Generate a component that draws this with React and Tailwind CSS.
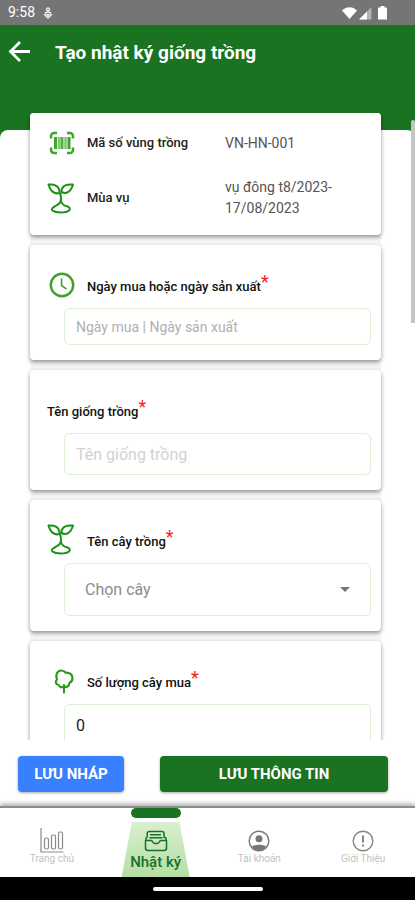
import React from "react";

const SproutIcon = () => (
  <svg viewBox="0 0 28 31" className="h-[31px] w-7" fill="none" stroke="#1c9116" strokeWidth="2" strokeLinejoin="round">
    <path d="M1.500 1.500c6-.4 11 1 11.200 8.500C7 11.500 3.500 8.500 1.500 1.500z" />
    <path d="M26 1.500c-6.500-.4-11.400 1-11.700 7.500 5.200 2.500 9.700-.5 11.700-7.500z" />
    <path d="M13 10c1.400 3 1 6 .8 9.500" />
    <path d="M13.800 18c-.6 3-3.300 3.600-5.300 4.800-3.500 2.200-4.500 3.500-3 4.700 3.700 2.700 13.300 2.700 16.500 0 1.800-1.600.5-3.400-2-4.200-3.200-.6-5-2.300-6.200-5.300z" />
  </svg>
);

const BarcodeIcon = () => (
  <svg viewBox="-2 0 28 24" className="h-6 w-7" fill="none" stroke="#3fa52a">
    <path
      d="M2 7.500V5a3 3 0 0 1 3-3h3M18 2h3a3 3 0 0 1 3 3v2.500M24 16.500V19a3 3 0 0 1-3 3h-3M8 22H5a3 3 0 0 1-3-3v-2.500"
      strokeWidth="2.500"
    />
    <path d="M6.500 6v12M20 6v12" strokeWidth="3" />
    <path d="M10 6v12M16.500 6v12" strokeWidth="2.500" strokeOpacity=".65" />
    <path d="M13 6v12" strokeWidth="3" strokeOpacity=".9" />
  </svg>
);

const ClockIcon = () => (
  <svg viewBox="-2 0 28 26" className="h-[26px] w-7" fill="none" stroke="#3fa02c" strokeLinecap="round" strokeLinejoin="round">
    <circle cx="13" cy="13" r="11.200" strokeWidth="2.400" />
    <path d="M12.500 7v6.500l4.500 3.200" strokeWidth="1.600" />
  </svg>
);

const TreeIcon = () => (
  <svg viewBox="0 0 28 26" className="h-[26px] w-7" fill="none" stroke="#2d9a1d" strokeWidth="2.200" strokeLinecap="round" strokeLinejoin="round">
    <path d="M17 18.500c-2 1.500-4.600.6-5.300-1.500-2.900-.2-3.800-3.600-1.700-5.500C8 7 10.300 2.500 14.500 2.500c2 0 3.200.8 3.900 2.100 4.200-.3 7.100 2 7.100 5.400 0 2.800-1.400 4.300-3 4.900-.4 3.500-3.200 4.700-5.500 3.600z" />
    <path d="M17 17v7.500" />
  </svg>
);

const ChartIcon = () => (
  <svg viewBox="0 0 24 25" className="h-[25px] w-6" fill="none" stroke="#8b8b8b" strokeWidth="1.200">
    <path d="M1 0v24h22.500" />
    <rect x="4.500" y="10" width="4" height="11" rx="1.800" />
    <rect x="11.500" y="7" width="4" height="14" rx="1.500" />
    <rect x="18.500" y="4" width="4" height="17" rx="1.500" />
  </svg>
);

const InboxIcon = () => (
  <svg viewBox="0 0 24 22" className="h-[22px] w-6" fill="none" stroke="#17702a" strokeWidth="1.500" strokeLinejoin="round" strokeLinecap="round">
    <path d="M1.500 10.500h6c.5 0 1.500 3 3 3h3c1.500 0 2.500-3 3-3h6V18a2.500 2.500 0 0 1-2.500 2.500H4A2.500 2.500 0 0 1 1.500 18z" />
    <path d="M2 10V8l1.200-1V3.500a2 2 0 0 1 2-2H18a2 2 0 0 1 2 2V7l2 1v2M6.500 4.800h10M6 7.800h12" />
  </svg>
);

const AccountIcon = () => (
  <svg viewBox="0 0 24 24" className="h-6 w-6" fill="#777">
    <circle cx="12" cy="12" r="9.800" fill="none" stroke="#777" strokeWidth="1.400" />
    <circle cx="12" cy="9.800" r="3.500" />
    <path d="M4.800 17.500c3.500-2.200 10.900-2.200 14.400 0-3.200 5.200-11.200 5.200-14.400 0z" />
  </svg>
);

const InfoIcon = () => (
  <svg viewBox="0 0 24 24" className="h-6 w-6" fill="none" stroke="#858585" strokeWidth="1.400">
    <circle cx="12" cy="12" r="9.800" />
    <path d="M12 6.500v7M12 15.500v2" strokeWidth="2" />
  </svg>
);

const StatusBar = () => (
  <div className="flex h-[25px] shrink-0 items-center justify-between bg-[#757575] pl-2 pr-[27px] text-white">
    <div className="flex items-center gap-2">
      <span className="text-[14px]">9:58</span>
      <svg viewBox="0 0 10 12" className="h-3 w-[10px]" fill="none" stroke="#e8e8e8" strokeWidth="1.500">
        <circle cx="5" cy="2.500" r="1.500" />
        <path d="M5 4.500l3.500 3L5 11 1.500 7.500zM2 5l3 3.500L8 5" />
      </svg>
    </div>
    <svg viewBox="0 0 46 14" className="h-[14px] w-[46px]" fill="#fff">
      <path d="M0 4.500C4 0 11 0 15 4.500L7.500 13z" />
      <path d="M17 13.500L29.500 1v12.500z" fillOpacity=".45" />
      <path d="M17 13.500l8-8v8z" />
      <path d="M38.500 0h4v1.500H45v12h-9v-12h2.500z" />
    </svg>
  </div>
);

const Header = () => (
  <header className="shrink-0 bg-[#197320]">
    <div className="flex h-[105px] items-start gap-6 pl-2 pt-4">
      <button type="button" aria-label="Quay lại" className="shrink-0">
        <svg viewBox="0 0 23 22" className="h-[22px] w-[23px]" fill="none" stroke="#fff" strokeWidth="2.800">
          <path d="M22 10.500H3M12 1L2.500 10.500l9.500 9.500" />
        </svg>
      </button>
      <h1 className="text-[19px] leading-6 font-bold text-white">Tạo nhật ký giống trồng</h1>
    </div>
    <div className="h-2 rounded-t-lg bg-white" />
  </header>
);

const Card = ({ children }) => (
  <section className="rounded bg-white pl-[17px] pr-[10px] shadow-[0_2px_4px_rgba(0,0,0,0.42)]">{children}</section>
);

const InfoRow = ({ icon: Icon, label, children }) => (
  <div className="flex items-center">
    <dt className="flex w-[178px] shrink-0 items-center gap-3 text-[13px] font-medium text-[#222]">
      <Icon />
      {label}
    </dt>
    <dd className="text-[14px] leading-[21px] text-[#555]">{children}</dd>
  </div>
);

const Field = ({ id, icon: Icon, label, children }) => (
  <Card>
    <div className="flex h-[63px] items-center gap-3 pt-4">
      {Icon && <Icon />}
      <label htmlFor={id} className="text-[13px] font-medium text-[#111]">
        {label}
        <span className="align-[3px] text-[18px] leading-none font-normal text-[#ff1a1a]">*</span>
      </label>
    </div>
    <div className="relative ml-[17px] pb-[15px]">{children}</div>
  </Card>
);

const inputClass = "block w-full rounded-md border border-[#dcefd6] bg-white px-[11px] outline-none";

const navItems = [
  { label: "Trang chủ", icon: ChartIcon },
  { label: "Nhật ký", icon: InboxIcon, active: true },
  { label: "Tài khoản", icon: AccountIcon },
  { label: "Giới Thiệu", icon: InfoIcon },
];

const BottomNav = () => (
  <nav className="grid h-[71px] shrink-0 grid-cols-4 border-t-2 border-[#8c8c8c] bg-white shadow-[0_-2px_5px_rgba(0,0,0,0.35)]">
    {navItems.map(({ label, icon: Icon, active }) =>
      active ? (
        <a key={label} href="#" aria-current="page" className="flex flex-col items-center">
          <span className="h-[10px] w-[50px] rounded-full bg-[#197320]" />
          <span className="mt-1 flex w-[68px] flex-1 flex-col items-center bg-linear-to-b from-[#d9efcf] to-[#b4dfa2] pt-2 text-[15px] leading-5 font-medium text-[#17702a] [clip-path:polygon(15%_0,85%_0,100%_100%,0_100%)]">
            <Icon />
            {label}
          </span>
        </a>
      ) : (
        <a key={label} href="#" className="flex flex-col items-center pt-5 text-[10px] leading-3 text-[#c2c2c2]">
          <span className="flex h-[25px] items-center">
            <Icon />
          </span>
          {label}
        </a>
      )
    )}
  </nav>
);

const App = () => {
  return (
    <div className="flex h-screen flex-col overflow-hidden bg-white font-[Roboto,'Noto_Sans',sans-serif]">
      <StatusBar />
      <Header />

      <main className="relative -mt-[25px] min-h-0 flex-1 overflow-hidden pl-[30px] pr-[34px]">
        <div className="flex flex-col gap-[10px] rounded bg-[#f5f5f5]">
          <Card>
            <dl className="flex flex-col gap-5 py-4">
              <div className="flex h-7 items-center">
                <InfoRow icon={BarcodeIcon} label="Mã số vùng trồng">
                  VN-HN-001
                </InfoRow>
              </div>
              <InfoRow icon={SproutIcon} label="Mùa vụ">
                vụ đông t8/2023-
                <br />
                17/08/2023
              </InfoRow>
            </dl>
          </Card>

          <Field id="date" icon={ClockIcon} label="Ngày mua hoặc ngày sản xuất">
            <input id="date" type="text" placeholder="Ngày mua | Ngày sản xuất" className={`${inputClass} h-[37px] text-[14px] placeholder:text-[#b0b0b0]`} />
          </Field>

          <Field id="seed" label="Tên giống trồng">
            <input id="seed" type="text" placeholder="Tên giống trồng" className={`${inputClass} h-[42px] text-[16px] placeholder:text-[#d2d2d2]`} />
          </Field>

          <Field id="plant" icon={SproutIcon} label="Tên cây trồng">
            <select id="plant" defaultValue="" className="block h-[53px] w-full appearance-none rounded-md border border-[#dcefd6] bg-white px-5 text-[16px] text-[#8c8c8c] outline-none">
              <option value="">Chọn cây</option>
            </select>
            <svg viewBox="0 0 10 5" className="pointer-events-none absolute right-[21px] top-6 h-[5px] w-[10px]" fill="#777">
              <path d="M0 0h10L5 5z" />
            </svg>
          </Field>

          <Field id="amount" icon={TreeIcon} label="Số lượng cây mua">
            <input id="amount" type="text" inputMode="numeric" defaultValue="0" className={`${inputClass} h-[42px] text-[16px] text-[#222]`} />
          </Field>
        </div>
        <div className="absolute right-0 top-[7px] h-[203px] w-1 rounded-t bg-[#c4c4c4]" />
      </main>

      <div className="flex shrink-0 gap-9 pt-4 pr-[27px] pb-[14px] pl-[18px]">
        <button type="button" className="h-9 w-[106px] shrink-0 rounded bg-[#3880ff] text-[15px] font-bold text-white shadow-[0_1px_3px_rgba(0,0,0,0.35)]">
          LƯU NHÁP
        </button>
        <button type="button" className="h-9 flex-1 rounded bg-[#197320] text-[15px] font-bold text-white shadow-[0_1px_3px_rgba(0,0,0,0.35)]">
          LƯU THÔNG TIN
        </button>
      </div>

      <BottomNav />

      <div className="flex h-[23px] shrink-0 items-center justify-center bg-black">
        <div className="h-1 w-[110px] rounded-full bg-white" />
      </div>
    </div>
  );
};

export default App;
